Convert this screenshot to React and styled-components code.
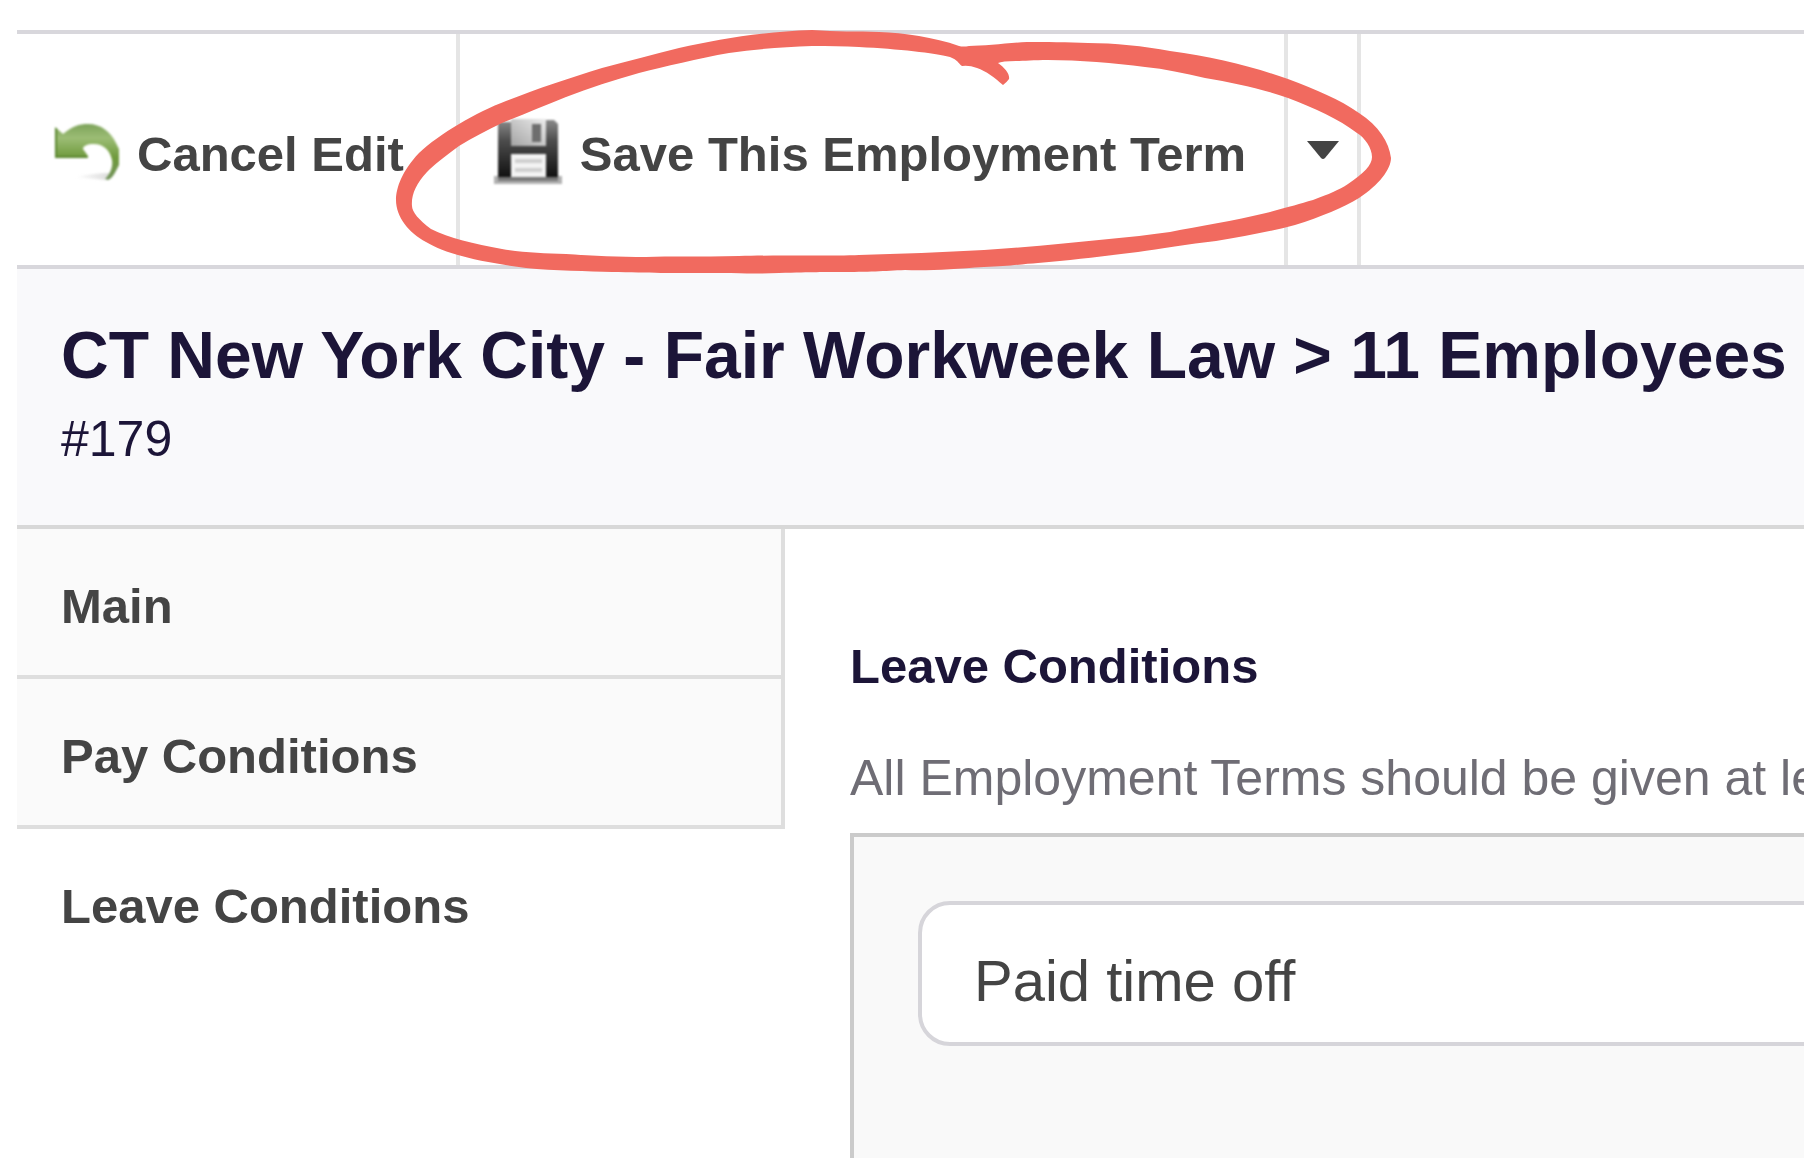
import React, { Component } from 'react';
import styled, { createGlobalStyle } from 'styled-components';

const GlobalStyle = createGlobalStyle`
  * {
    box-sizing: border-box;
  }
  body {
    margin: 0;
    background: white;
    color: #444;
    font-family: 'Liberation Sans', Arial, sans-serif;
    font-size: 50px;
    line-height: 60px;
  }
`;

const Page = styled.div`
  display: flex;
  flex-direction: column;
  min-height: 100vh;
  padding: 30px 0 0 17px;
  overflow: hidden;
`;

const Toolbar = styled.div`
  display: flex;
  height: 239px;
  border-top: 4px solid #d8d7dc;
  border-bottom: 4px solid #d8d7dc;
`;

const ToolbarButton = styled.button`
  display: flex;
  flex-shrink: 0;
  align-items: center;
  gap: 18px;
  padding: 4px ${props => props.$right || 34}px 0 34px;
  border: 0;
  border-right: 4px solid #e5e5e5;
  background: none;
  color: inherit;
  font: inherit;
  font-size: 49px;
  font-weight: 700;
  white-space: nowrap;
  cursor: pointer;
`;

const ButtonLabel = styled.span`
  padding-top: 4px;
`;

const MenuButton = styled(ToolbarButton)`
  justify-content: center;
  width: 73px;
  padding: 0;
`;

const SaveGroup = styled.div`
  position: relative;
  display: flex;
`;

const Icon = styled.svg`
  width: 68px;
  height: 66px;
  filter: blur(1px);
`;

const Caret = styled.svg`
  width: 32px;
  height: 18px;
`;

const Marker = styled.svg`
  position: absolute;
  top: -4px;
  left: -64px;
  width: 995px;
  height: 244px;
  overflow: visible;
  pointer-events: none;
`;

const Header = styled.header`
  padding: 48px 0 56px 44px;
  border-bottom: 4px solid #d8d8d8;
  background: #f9f9fb;
  color: #1c1538;
  white-space: nowrap;
`;

const Title = styled.h1`
  margin: 0 0 16px;
  font-size: 66px;
  line-height: 76px;
`;

const TermId = styled.div`
  font-size: 50px;
`;

const Body = styled.div`
  display: flex;
  flex: 1;
`;

const Tabs = styled.nav`
  flex: 0 0 768px;
`;

const Tab = styled.a`
  display: flex;
  align-items: center;
  height: 150px;
  padding: 8px 44px 0;
  border-right: 4px solid ${props => (props.$active ? 'transparent' : '#dedede')};
  border-bottom: 4px solid ${props => (props.$active ? 'transparent' : '#dedede')};
  background: ${props => (props.$active ? 'white' : '#fafafa')};
  color: inherit;
  font-size: 49px;
  font-weight: 700;
  text-decoration: none;
`;

const Content = styled.main`
  display: flex;
  flex: 1 0 1200px;
  flex-direction: column;
  padding: 107px 0 0 65px;
`;

const SectionTitle = styled.h2`
  margin: 0 0 52px;
  color: #1c1538;
  font-size: 49px;
`;

const Hint = styled.p`
  margin: 0 0 25px;
  color: #6f6d75;
  white-space: nowrap;
`;

const Panel = styled.section`
  flex: 1;
  padding: 64px;
  border: 4px solid #cbcbcb;
  border-bottom: 0;
  background: #f9f9f9;
`;

const Select = styled.select`
  width: 100%;
  height: 145px;
  padding: 14px 52px 0;
  border: 4px solid #d6d5da;
  border-radius: 32px;
  background: white;
  color: inherit;
  font: inherit;
  font-size: 58px;
  appearance: none;
`;

const UndoIcon = () => (
  <Icon viewBox="0 0 68 66" aria-hidden="true">
    <defs>
      <linearGradient id="undo" x1="0" y1="0" x2="0" y2="1">
        <stop offset="0" stopColor="#7da35a" />
        <stop offset="0.25" stopColor="#9cbd75" />
        <stop offset="0.6" stopColor="#6f9a3c" />
        <stop offset="1" stopColor="#71915a" />
      </linearGradient>
      <linearGradient id="undoShadow" x1="0" y1="0" x2="1" y2="0">
        <stop offset="0" stopColor="#fff" />
        <stop offset="1" stopColor="#ddd" />
      </linearGradient>
    </defs>
    <path d="M24 58 Q44 54 58 54 L54 61 Z" fill="url(#undoShadow)" />
    <path
      d="M4 8 L12 15 C22 7 28 5 37 5 C50 5 60 13 65 24 L68 30 V46 C65 52 62 59 57 61 L54 60 C60 54 62 47 61 41 C59 31 52 25 43 25 C36 25 32 27 32 30 L37 37 V39 H4 Z"
      fill="url(#undo)"
    />
    <path d="M5 9 V38 H36" fill="none" stroke="#5b8730" strokeWidth="2" />
  </Icon>
);

const SaveIcon = () => (
  <Icon viewBox="0 0 68 66" aria-hidden="true">
    <defs>
      <linearGradient id="disk" x1="0" y1="0" x2="0" y2="1">
        <stop offset="0" stopColor="#8a8a8a" />
        <stop offset="0.35" stopColor="#4c4c4c" />
        <stop offset="1" stopColor="#0c0c0c" />
      </linearGradient>
      <linearGradient id="shutter" x1="0" y1="1" x2="1" y2="0">
        <stop offset="0" stopColor="#a4a4a4" />
        <stop offset="1" stopColor="#ececec" />
      </linearGradient>
    </defs>
    <rect x="0" y="57" width="68" height="8" fill="#b0b0b0" />
    <path d="M4 3 H52 V1 H60 L64 5 V61 H4 Z" fill="url(#disk)" />
    <rect x="17" y="0" width="35" height="27" fill="url(#shutter)" />
    <rect x="38" y="5" width="9" height="18" fill="#6e6e6e" />
    <rect x="17" y="35" width="35" height="23" fill="#f3f3f3" />
    <rect x="21" y="40" width="27" height="4" fill="#cfcfcf" />
    <rect x="21" y="49" width="27" height="4" fill="#cfcfcf" />
    <rect x="4" y="58" width="60" height="4" fill="#777" />
  </Icon>
);

// hand drawn loop around the save button
const Loop = () => (
  <Marker viewBox="397 30 995 244" aria-hidden="true">
    <path
      fill="#f16a5f"
      fillRule="evenodd"
      d="M960 46 C935 37 905 33 880 32 C858 31 838 32 813 30 C760 32 720 39 680 48
        C655 54 630 61 603 68 C570 78 535 90 507 101 C478 112 440 134 420 153
        C403 171 397 188 397 200 C397 217 410 233 427 242 C450 256 490 263 527 268
        C555 271 590 271 613 272 C650 273 680 273 690 273 C730 273 755 274 780 273
        C815 272 825 272 840 272 C870 272 885 271 906 270 C930 271 955 269 985 267
        C1010 266 1025 264 1039 263 C1075 260 1105 256 1139 252 C1160 249 1190 244 1217 241
        C1245 236 1270 232 1296 225 C1322 217 1345 207 1360 198 C1380 185 1392 169 1392 158
        C1390 142 1380 126 1360 113 C1340 99 1318 90 1289 79 C1255 67 1215 57 1171 51
        C1145 46 1115 43 1089 43 C1070 42 1045 42 1028 42 C1010 43 985 46 970 46
        Q964 47 960 46 Z
        M999 63 C1006 68 1011 74 1010 79 Q1008 82 1004 85 C996 78 987 71 978 68
        Q970 65 963 66 C959 63 959 60 951 57 C935 53 900 49 860 47 C845 46 830 46 813 46
        C785 47 757 49 730 53 C700 58 665 67 640 73 C615 80 590 88 567 97
        C545 106 525 114 503 123 C488 130 473 138 460 146 C445 157 435 165 428 172
        C417 184 412 195 413 206 C413 212 420 220 432 229 C450 238 475 244 503 249
        C525 253 545 253 567 254 C595 256 620 257 647 257 C670 256 700 257 740 256
        C780 255 840 256 860 255 C900 254 945 252 985 250 C1030 247 1070 243 1110 239
        C1130 237 1150 235 1171 232 C1200 226 1235 221 1267 213 C1290 207 1300 204 1314 200
        C1330 194 1340 190 1349 184 C1365 173 1373 165 1373 157 C1373 148 1366 138 1358 133
        C1340 119 1315 108 1289 98 C1260 88 1235 83 1206 78 C1185 73 1166 69 1146 67
        C1115 63 1080 60 1049 60 C1035 60 1025 61 1017 61 Q1003 61 999 63 Z"
    />
  </Marker>
);

const tabs = [
  { slug: 'main', name: 'Main' },
  { slug: 'pay-conditions', name: 'Pay Conditions' },
  { slug: 'leave-conditions', name: 'Leave Conditions' },
];

class App extends Component {
  state = { tab: 'leave-conditions' };

  render() {
    return (
      <Page>
        <GlobalStyle />
        <Toolbar>
          <ToolbarButton type="button" $right={52}>
            <UndoIcon />
            <ButtonLabel>Cancel Edit</ButtonLabel>
          </ToolbarButton>
          <SaveGroup>
            <ToolbarButton type="button" $right={38}>
              <SaveIcon />
              <ButtonLabel>Save This Employment Term</ButtonLabel>
            </ToolbarButton>
            <MenuButton type="button" aria-label="More save options">
              <Caret viewBox="0 0 32 18" aria-hidden="true">
                <path d="M0 0 H32 L18 17 Q16 19 14 17 Z" fill="#444" />
              </Caret>
            </MenuButton>
            <Loop />
          </SaveGroup>
        </Toolbar>
        <Header>
          <Title>CT New York City - Fair Workweek Law &gt; 11 Employees -</Title>
          <TermId>#179</TermId>
        </Header>
        <Body>
          <Tabs>
            {tabs.map(tab => (
              <Tab
                key={tab.slug}
                href={`#${tab.slug}`}
                $active={tab.slug === this.state.tab}
                onClick={() => this.setState({ tab: tab.slug })}
              >
                {tab.name}
              </Tab>
            ))}
          </Tabs>
          <Content>
            <SectionTitle id="leave-title">Leave Conditions</SectionTitle>
            <Hint>All Employment Terms should be given at least</Hint>
            <Panel>
              <Select aria-labelledby="leave-title">
                <option>Paid time off</option>
              </Select>
            </Panel>
          </Content>
        </Body>
      </Page>
    );
  }
}

export default App;
